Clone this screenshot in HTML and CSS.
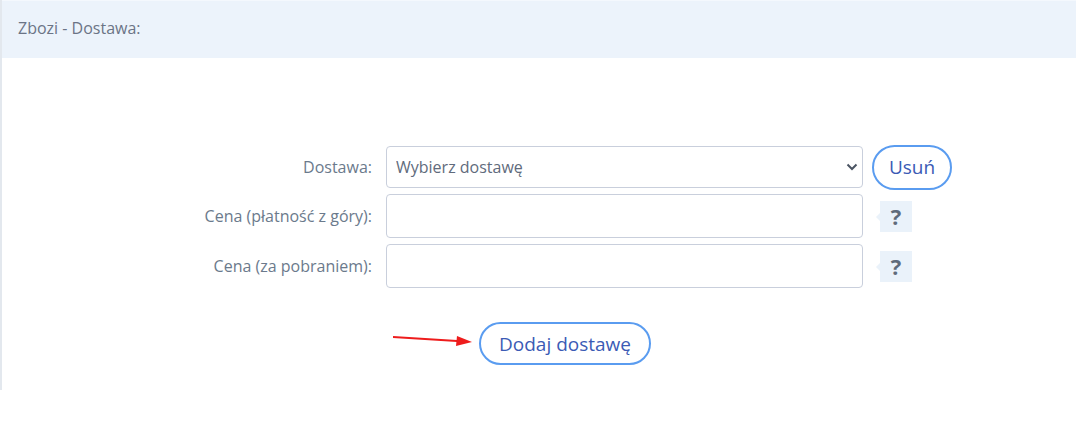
FILE: index.html
```html
<!DOCTYPE html>
<html lang="pl">
<head>
    <meta charset="UTF-8">
    <title>Zbozi - Dostawa</title>
    <link rel="stylesheet" href="styles.css">
</head>
<body>
    <div class="panel">
        <div class="panel-head">Zbozi - Dostawa:</div>
        <div class="panel-body">
            <div class="form">
                <label class="label">Dostawa:</label>
                <div class="select-wrap">
                    <select class="field">
                        <option>Wybierz dostawę</option>
                    </select>
                    <svg class="chevron" width="12" height="8" viewBox="0 0 12 8"><path d="M1.5 1.5 L6 6 L10.5 1.5" fill="none" stroke="#4b5563" stroke-width="2"/></svg>
                </div>
                <div class="side"><button class="btn btn-small">Usuń</button></div>

                <label class="label">Cena (płatność z góry):</label>
                <input class="field tall" type="text">
                <div class="side"><span class="help">?</span></div>

                <label class="label">Cena (za pobraniem):</label>
                <input class="field tall" type="text">
                <div class="side"><span class="help">?</span></div>
            </div>
            <div class="add-row">
                <svg class="arrow" width="86" height="14" viewBox="0 0 86 14"><path d="M0 3 L72 7.5" stroke="#ee1c1c" stroke-width="2.2"/><path d="M64 2 L79 8 L63 12 Z" fill="#ee1c1c"/></svg>
                <button class="btn btn-add">Dodaj dostawę</button>
            </div>
        </div>
    </div>
</body>
</html>
```

FILE: styles.css
```css
body {
    margin: 0px;
    padding: 0px;
    background-color: #ffffff;
    font-family: "Open Sans", "Noto Sans", sans-serif;
}

.panel {
    width: 1076px;
    height: 390px;
    border-left: 2px solid #e3e8ee;
    box-sizing: border-box;
}

.panel-head {
    height: 58px;
    box-sizing: border-box;
    border-top: 1px solid #f4f8fd;
    background-color: #ecf3fb;
    color: #6b7486;
    font-size: 16px;
    padding-left: 16px;
    line-height: 54px;
}

.panel-body {
    padding-top: 88px;
}

.form {
    display: grid;
    grid-template-columns: 370px 477px auto;
    grid-template-rows: 42px 44px 44px;
    column-gap: 14px;
    row-gap: 6px;
    align-items: center;
}

.label {
    text-align: right;
    color: #6b7a8c;
    font-size: 16px;
}

.select-wrap {
    position: relative;
    height: 42px;
}

.field {
    width: 477px;
    height: 42px;
    box-sizing: border-box;
    border: 1px solid #c9cfdc;
    border-radius: 4px;
    background-color: #ffffff;
    font-family: "Open Sans", "Noto Sans", sans-serif;
    font-size: 16px;
    color: #5f6b7c;
    padding: 0px 9px;
    outline: none;
}

select.field {
    appearance: none;
    -webkit-appearance: none;
}

.field.tall {
    height: 44px;
}

.chevron {
    position: absolute;
    right: 5px;
    top: 17px;
}

.side {
    margin-left: -5px;
    display: flex;
    align-items: center;
}

.btn {
    background-color: #ffffff;
    border: 2px solid #5a9cf0;
    border-radius: 23px;
    color: #3b5bb5;
    font-family: "Open Sans", "Noto Sans", sans-serif;
    font-size: 19px;
    cursor: pointer;
    padding: 0px;
}

.btn-small {
    width: 80px;
    height: 45px;
}

.help {
    position: relative;
    margin-left: 8px;
    width: 32px;
    height: 31px;
    background-color: #eaf2fa;
    color: #5f6b7a;
    font-weight: bold;
    font-size: 22px;
    display: flex;
    align-items: center;
    justify-content: center;
}

.help::before {
    content: "";
    position: absolute;
    left: -4px;
    top: 12px;
    border-top: 4px solid transparent;
    border-bottom: 4px solid transparent;
    border-right: 4px solid #eaf2fa;
}

.add-row {
    display: flex;
    align-items: center;
    margin-top: 34px;
    padding-left: 391px;
}

.arrow {
    margin-top: -6px;
}

.btn-add {
    width: 172px;
    height: 43px;
    border-radius: 22px;
}
```
